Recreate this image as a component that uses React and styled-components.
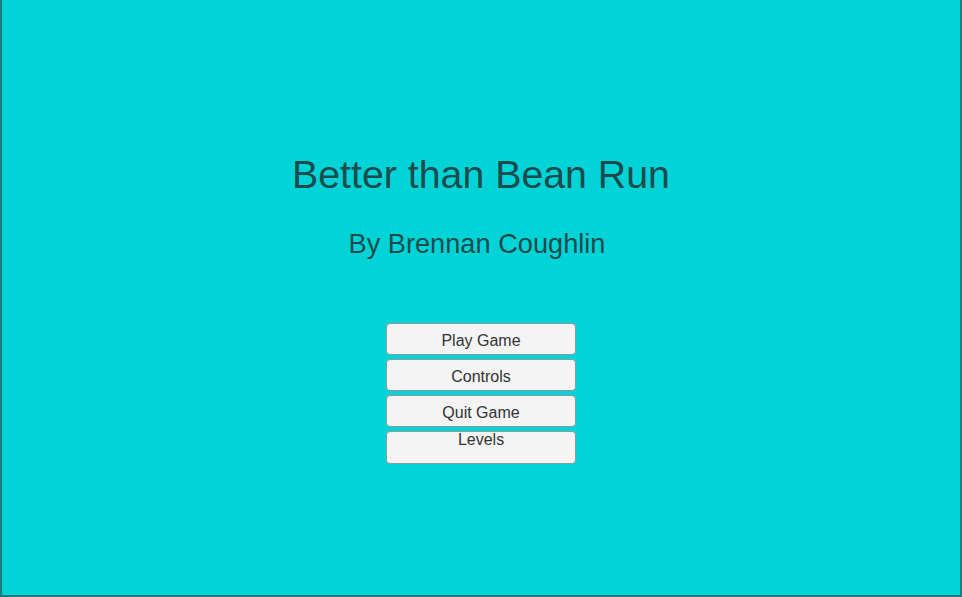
import styled, { createGlobalStyle } from "styled-components";

const GlobalStyle = createGlobalStyle`
  html, body {
    margin: 0;
    padding: 0;
    background: #02d3d6;
  }
  * {
    box-sizing: border-box;
  }
`;

const buttons = ["Play Game", "Controls", "Quit Game", "Levels"];

export default function App() {
  return (
    <>
      <GlobalStyle />
      <Screen>
        <Title>Better than Bean Run</Title>
        <Subtitle>By Brennan Coughlin</Subtitle>
        <Menu>
          {buttons.map((label) => (
            <MenuButton key={label} $top={label === "Levels"}>
              {label}
            </MenuButton>
          ))}
        </Menu>
      </Screen>
    </>
  );
}

const Screen = styled.div`
  width: 962px;
  height: 597px;
  background: #02d3d6;
  border-left: 2px solid #1f7c7e;
  border-right: 2px solid #1f7c7e;
  border-bottom: 2px solid #1f7c7e;
  display: flex;
  flex-direction: column;
  align-items: center;
  padding-top: 151px;
  font-family: "Liberation Sans", Arial, sans-serif;
`;

const Title = styled.h1`
  margin: 0;
  font-size: 39.3px;
  font-weight: normal;
  line-height: 46px;
  color: #1b4b4c;
`;

const Subtitle = styled.h2`
  margin: 31px 0 0;
  padding-right: 8px;
  font-size: 27.2px;
  font-weight: normal;
  line-height: 32px;
  color: #1b4b4c;
`;

const Menu = styled.div`
  margin-top: 63px;
  display: flex;
  flex-direction: column;
  gap: 4px;
`;

const MenuButton = styled.button`
  width: 190px;
  height: ${(p) => (p.$top ? "33px" : "32px")};
  margin: 0;
  padding: ${(p) => (p.$top ? "0 0 15px" : "3px 0 0")};
  background: #f4f4f4;
  border: 1px solid #8c9a9b;
  border-radius: 4px;
  font-family: "Liberation Sans", Arial, sans-serif;
  font-size: 16px;
  color: #333;
  display: flex;
  align-items: center;
  justify-content: center;
`;
